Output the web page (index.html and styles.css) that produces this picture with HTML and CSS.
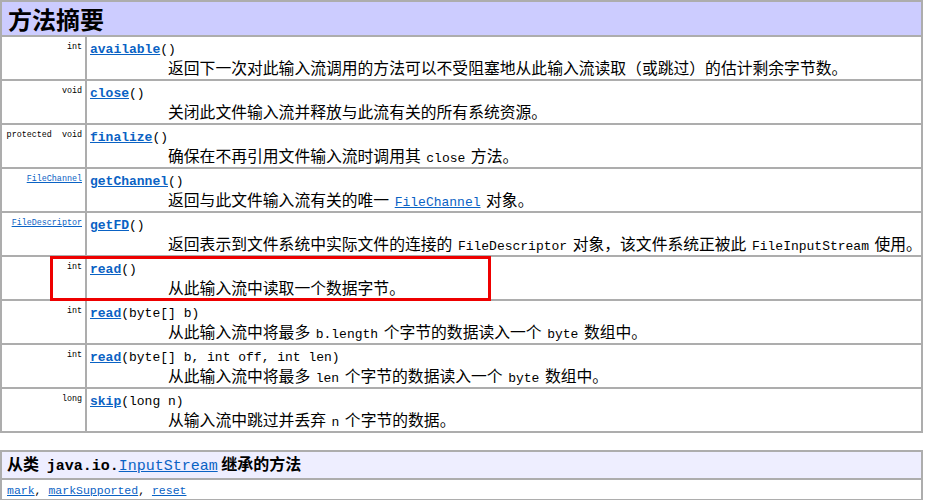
FILE: index.html
```html
<!DOCTYPE html>
<html lang="zh-CN">

<head>
    <meta charset="UTF-8">
    <title>FileInputStream 方法摘要</title>
    <link rel="stylesheet" href="styles.css">
</head>

<body>

    <div class="page">

        <!-- Method summary -->
        <table class="summary">
            <colgroup>
                <col class="type-col">
                <col>
            </colgroup>
            <tr class="head-row">
                <th colspan="2">方法摘要</th>
            </tr>
            <tr>
                <td class="type"><code>int</code></td>
                <td class="sig"><code class="name"><a href="#">available</a>()</code>
                    <div class="desc">返回下一次对此输入流调用的方法可以不受阻塞地从此输入流读取（或跳过）的估计剩余字节数。</div>
                </td>
            </tr>
            <tr>
                <td class="type"><code>void</code></td>
                <td class="sig"><code class="name"><a href="#">close</a>()</code>
                    <div class="desc">关闭此文件输入流并释放与此流有关的所有系统资源。</div>
                </td>
            </tr>
            <tr>
                <td class="type"><code>protected&nbsp;&nbsp;void</code></td>
                <td class="sig"><code class="name"><a href="#">finalize</a>()</code>
                    <div class="desc">确保在不再引用文件输入流时调用其 <code>close</code> 方法。</div>
                </td>
            </tr>
            <tr>
                <td class="type"><code><a href="#">FileChannel</a></code></td>
                <td class="sig"><code class="name"><a href="#">getChannel</a>()</code>
                    <div class="desc">返回与此文件输入流有关的唯一 <a class="ref" href="#"><code>FileChannel</code></a> 对象。</div>
                </td>
            </tr>
            <tr>
                <td class="type"><code><a href="#">FileDescriptor</a></code></td>
                <td class="sig"><code class="name"><a href="#">getFD</a>()</code>
                    <div class="desc">返回表示到文件系统中实际文件的连接的 <code>FileDescriptor</code> 对象，该文件系统正被此 <code>FileInputStream</code> 使用。</div>
                </td>
            </tr>
            <tr>
                <td class="type"><code>int</code></td>
                <td class="sig"><code class="name"><a href="#">read</a>()</code>
                    <div class="desc">从此输入流中读取一个数据字节。</div>
                </td>
            </tr>
            <tr>
                <td class="type"><code>int</code></td>
                <td class="sig"><code class="name"><a href="#">read</a>(byte[]&nbsp;b)</code>
                    <div class="desc">从此输入流中将最多 <code>b.length</code> 个字节的数据读入一个 <code>byte</code> 数组中。</div>
                </td>
            </tr>
            <tr>
                <td class="type"><code>int</code></td>
                <td class="sig"><code class="name"><a href="#">read</a>(byte[]&nbsp;b, int&nbsp;off, int&nbsp;len)</code>
                    <div class="desc">从此输入流中将最多 <code>len</code> 个字节的数据读入一个 <code>byte</code> 数组中。</div>
                </td>
            </tr>
            <tr>
                <td class="type"><code>long</code></td>
                <td class="sig"><code class="name"><a href="#">skip</a>(long&nbsp;n)</code>
                    <div class="desc">从输入流中跳过并丢弃 <code>n</code> 个字节的数据。</div>
                </td>
            </tr>
        </table>

        <!-- highlight box drawn over the read() row -->
        <div class="highlight"></div>

        <!-- Inherited methods -->
        <table class="inherited">
            <tr class="sub-head">
                <th>从类 <code>java.io.<a href="#">InputStream</a></code> 继承的方法</th>
            </tr>
            <tr>
                <td class="links"><code><a href="#">mark</a>, <a href="#">markSupported</a>, <a href="#">reset</a></code></td>
            </tr>
        </table>

    </div>

</body>
</html>
```

FILE: styles.css
```css
body {
    margin: 0;
    padding: 0;
    background: #fff;
    color: #000;
    font-family: "Noto Sans CJK SC", "Liberation Serif", serif;
}

.page {
    position: relative;
    width: 923px;
}

code {
    font-family: "Liberation Mono", "DejaVu Sans Mono", monospace;
}

a {
    color: #0a62c4;
}

table {
    width: 923px;
    border-collapse: collapse;
}

td, th {
    border: 2px solid #adadad;
    padding: 0;
}

/* Method summary table */
.summary {
    table-layout: fixed;
}

.type-col {
    width: 85px;
}

.head-row th {
    background-color: #CCCCFF;
    font-size: 24px;
    font-weight: bold;
    text-align: left;
    height: 33px;
    padding: 0 0 0 6px;
    line-height: 30px;
}

.summary td {
    height: 42px;
    vertical-align: top;
    line-height: 0;
}

.type {
    text-align: right;
    white-space: nowrap;
}

.type code {
    display: block;
    padding: 5px 3px 0 0;
    font-size: 8.4px;
    line-height: 10px;
}

.sig .name {
    display: block;
    padding: 4px 0 0 3px;
    font-size: 13px;
    line-height: 17px;
}

.sig .name > a {
    font-weight: bold;
}

.desc {
    padding-left: 81px;
    font-size: 15.8px;
    line-height: 19px;
    height: 19px;
    white-space: nowrap;
}

.desc code {
    font-size: 13px;
    line-height: 1;
    margin: 0 2px;
}

.highlight {
    position: absolute;
    left: 50px;
    top: 256px;
    width: 435px;
    height: 39px;
    border: 3px solid #ee0000;
}

/* Inherited methods table */
.inherited {
    margin-top: 17px;
}

.sub-head th {
    background-color: #EEEEFF;
    text-align: left;
    font-size: 16px;
    font-weight: bold;
    height: 24px;
    padding: 0 0 0 5px;
    line-height: 22px;
}

.sub-head code {
    font-size: 15px;
    margin-left: 4px;
}

.sub-head code a {
    font-weight: normal;
}

.links {
    padding: 1px 0 0 5px;
    font-size: 11.5px;
    line-height: 16px;
}
```
